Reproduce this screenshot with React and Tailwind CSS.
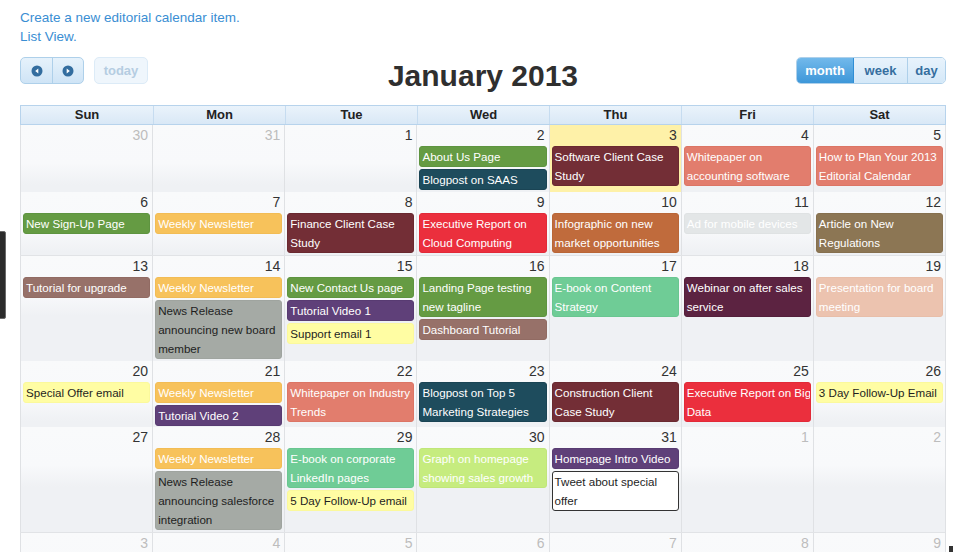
const C = {
  green: 'bg-[#659b43] border-[#5e9440] text-white',
  teal: 'bg-[#1e4c5d] border-[#1a4454] text-white',
  maroon: 'bg-[#732e36] border-[#6a2930] text-white',
  salmon: 'bg-[#e27d6d] border-[#dc7565] text-white',
  weekly: 'bg-[#f7c25b] border-[#f2bc55] text-white',
  red: 'bg-[#eb2f3d] border-[#e22a38] text-white',
  orange: 'bg-[#c06b3c] border-[#b96637] text-white',
  ghost: 'bg-[#e3e6e7] border-[#dfe2e3] text-white',
  olive: 'bg-[#8c7654] border-[#86704f] text-white',
  rose: 'bg-[#977169] border-[#916b63] text-white',
  news: 'bg-[#a5aaa5] border-[#9fa49f] text-[#1e1e1e]',
  purple: 'bg-[#5f4079] border-[#583b72] text-white',
  note: 'bg-[#fffda3] border-[#fbf99c] text-[#1e1e1e]',
  mint: 'bg-[#6fcc96] border-[#69c690] text-white',
  plum: 'bg-[#5c2341] border-[#541f3b] text-white',
  peach: 'bg-[#ecc3af] border-[#e8bea9] text-white',
  lime: 'bg-[#c6ec7f] border-[#c0e679] text-white',
  tweet: 'bg-white border-[#333] text-[#1e1e1e]',
}

const weeks = [
  {
    h: 'h-[67px]',
    days: [
      { n: 30, out: true },
      { n: 31, out: true },
      { n: 1 },
      { n: 2, ev: [['green', ['About Us Page']], ['teal', ['Blogpost on SAAS']]] },
      { n: 3, today: true, ev: [['maroon', ['Software Client Case', 'Study']]] },
      { n: 4, ev: [['salmon', ['Whitepaper on', 'accounting software']]] },
      { n: 5, ev: [['salmon', ['How to Plan Your 2013', 'Editorial Calendar']]] },
    ],
  },
  {
    h: 'h-[64px]',
    days: [
      { n: 6, ev: [['green', ['New Sign-Up Page']]] },
      { n: 7, ev: [['weekly', ['Weekly Newsletter']]] },
      { n: 8, ev: [['maroon', ['Finance Client Case', 'Study']]] },
      { n: 9, ev: [['red', ['Executive Report on', 'Cloud Computing']]] },
      { n: 10, ev: [['orange', ['Infographic on new', 'market opportunities']]] },
      { n: 11, ev: [['ghost', ['Ad for mobile devices']]] },
      { n: 12, ev: [['olive', ['Article on New', 'Regulations']]] },
    ],
  },
  {
    h: 'h-[105px]',
    days: [
      { n: 13, ev: [['rose', ['Tutorial for upgrade']]] },
      { n: 14, ev: [['weekly', ['Weekly Newsletter']], ['news', ['News Release', 'announcing new board', 'member']]] },
      { n: 15, ev: [['green', ['New Contact Us page']], ['purple', ['Tutorial Video 1']], ['note', ['Support email 1']]] },
      { n: 16, ev: [['green', ['Landing Page testing', 'new tagline']], ['rose', ['Dashboard Tutorial']]] },
      { n: 17, ev: [['mint', ['E-book on Content', 'Strategy']]] },
      { n: 18, ev: [['plum', ['Webinar on after sales', 'service']]] },
      { n: 19, ev: [['peach', ['Presentation for board', 'meeting']]] },
    ],
  },
  {
    h: 'h-[66px]',
    days: [
      { n: 20, ev: [['note', ['Special Offer email']]] },
      { n: 21, ev: [['weekly', ['Weekly Newsletter']], ['purple', ['Tutorial Video 2']]] },
      { n: 22, ev: [['salmon', ['Whitepaper on Industry', 'Trends']]] },
      { n: 23, ev: [['teal', ['Blogpost on Top 5', 'Marketing Strategies']]] },
      { n: 24, ev: [['maroon', ['Construction Client', 'Case Study']]] },
      { n: 25, ev: [['red', ['Executive Report on Big', 'Data']]] },
      { n: 26, ev: [['note', ['3 Day Follow-Up Email']]] },
    ],
  },
  {
    h: 'h-[106px]',
    days: [
      { n: 27 },
      { n: 28, ev: [['weekly', ['Weekly Newsletter']], ['news', ['News Release', 'announcing salesforce', 'integration']]] },
      { n: 29, ev: [['mint', ['E-book on corporate', 'LinkedIn pages']], ['note', ['5 Day Follow-Up email']]] },
      { n: 30, ev: [['lime', ['Graph on homepage', 'showing sales growth']]] },
      { n: 31, ev: [['purple', ['Homepage Intro Video']], ['tweet', ['Tweet about special', 'offer']]] },
      { n: 1, out: true },
      { n: 2, out: true },
    ],
  },
  {
    h: 'h-[66px]',
    days: [3, 4, 5, 6, 7, 8, 9].map((n) => ({ n, out: true })),
  },
]

const dayNames = ['Sun', 'Mon', 'Tue', 'Wed', 'Thu', 'Fri', 'Sat']

function ArrowIcon({ dir }) {
  return (
    <svg width="12" height="12" viewBox="0 0 12 12">
      <circle cx="6" cy="6" r="5.5" fill="#336d9f" />
      {dir === 'left' ? (
        <polygon points="7.3,3.4 7.3,8.6 4.2,6" fill="#fff" />
      ) : (
        <polygon points="4.7,3.4 4.7,8.6 7.8,6" fill="#fff" />
      )}
    </svg>
  )
}

function Event({ color, lines }) {
  return (
    <div className={`mx-[2px] mb-[2px] overflow-hidden whitespace-nowrap rounded-[3px] border px-[2px] text-[11.6px] leading-[19px] ${C[color]}`}>
      {lines.map((l, i) => (
        <div key={i}>{l}</div>
      ))}
    </div>
  )
}

export default function App() {
  return (
    <div className="relative min-h-[552px] bg-white font-['Liberation_Sans',Arial,sans-serif] text-[#333]">
      <div className="pl-[20px] pt-[8px] text-[13.5px] leading-[19px] text-[#3a8ed3]">
        <div>Create a new editorial calendar item.</div>
        <div>List View.</div>
      </div>

      <div className="ml-[20px] w-[926px]">
        <div className="mt-[11px] grid h-[48px] grid-cols-[1fr_auto_1fr] items-start">
          <div className="flex">
            <div className="flex h-[27px] overflow-hidden rounded-[5px] border border-[#aed0ea] bg-[linear-gradient(#e6f2fb,#cfe4f6)]">
              <button type="button" className="flex w-[31px] items-center justify-center">
                <ArrowIcon dir="left" />
              </button>
              <button type="button" className="flex w-[31px] items-center justify-center border-l border-[#aed0ea]">
                <ArrowIcon dir="right" />
              </button>
            </div>
            <button
              type="button"
              className="ml-[10px] h-[27px] w-[54px] rounded-[5px] border border-[#dcebf7] bg-[#eff6fc] text-[13px] font-bold text-[#b5cde2]"
            >
              today
            </button>
          </div>

          <h2 className="mt-[2px] text-[30px] font-bold leading-[34px] text-[#2f2f2f]">January 2013</h2>

          <div className="flex justify-end">
            <div className="flex h-[27px] overflow-hidden rounded-[5px] border border-[#aed0ea] text-[13px] font-bold">
              <button type="button" className="w-[57px] border-r border-[#2f8ed5] bg-[linear-gradient(#72b9eb,#3d97d9)] text-white">
                month
              </button>
              <button type="button" className="w-[53px] bg-[linear-gradient(#e8f3fc,#d4e8f8)] text-[#356e9f]">
                week
              </button>
              <button type="button" className="w-[38px] border-l border-[#aed0ea] bg-[linear-gradient(#e8f3fc,#d4e8f8)] text-[#356e9f]">
                day
              </button>
            </div>
          </div>
        </div>

        <div className="grid h-[20px] grid-cols-7 border border-[#b7d3ec] bg-[linear-gradient(#eaf3fb,#d9e8f6)] text-center text-[13px] font-bold leading-[18px] text-[#222]">
          {dayNames.map((d, i) => (
            <div key={d} className={i ? 'border-l border-[#c6dcf0]' : ''}>
              {d}
            </div>
          ))}
        </div>

        <div className="border-r border-[#dfe1e4]">
          {weeks.map((w, wi) => (
            <div key={wi} className={`grid grid-cols-7 border-b border-[#e1e3e6] ${w.h}`}>
              {w.days.map((d, di) => (
                <div
                  key={di}
                  className={`border-l border-[#dfe1e4] ${
                    d.today
                      ? 'bg-[#fef1a8]'
                      : 'bg-[linear-gradient(to_bottom,#f9fafb_0px,#f8f9fb_38px,#eff1f4_60px,#eff1f4_100%)]'
                  }`}
                >
                  <div className={`h-[21px] pr-[4px] text-right text-[14px] leading-[21px] ${d.out ? 'text-[#bdbdbd]' : 'text-[#333]'}`}>
                    {d.n}
                  </div>
                  {(d.ev || []).map(([c, lines], ei) => (
                    <Event key={ei} color={c} lines={lines} />
                  ))}
                </div>
              ))}
            </div>
          ))}
        </div>
      </div>

      <div className="absolute left-[-2px] top-[231px] h-[88px] w-[8px] rounded-r-[2px] border border-[#6a6a6a] bg-[#2b2b2b]" />
      <div className="absolute left-[949px] top-[546px] h-[6px] w-[4px] bg-[#333]" />
    </div>
  )
}
